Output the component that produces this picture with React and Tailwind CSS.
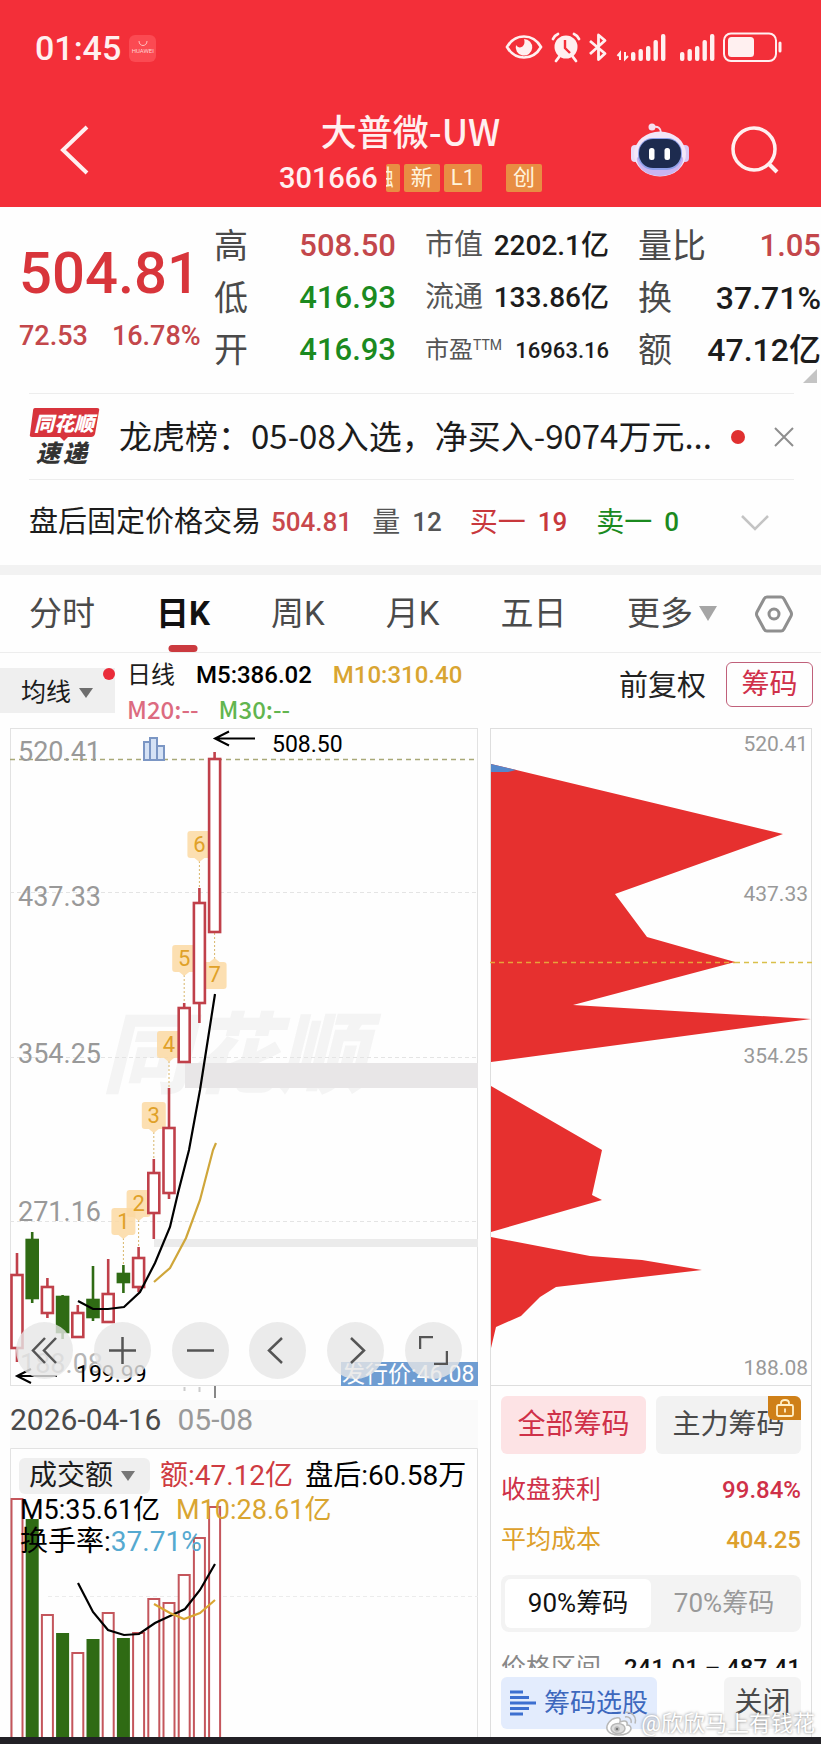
import { useState } from "react";

const GREEN = "#2f6b14";
const RED = "#c0404a";
const GOLD = "#d9a531";

// Vertical values are positions on the price axis of the chart
const candles = [
  { high: 525, top: 546, bottom: 621, low: 634, up: true },
  { high: 504, top: 511, bottom: 571, low: 575, up: false },
  { high: 550, top: 558, bottom: 586, low: 590, up: true },
  { high: 567, top: 568, bottom: 605, low: 611, up: false },
  { high: 577, top: 584, bottom: 610, low: 610, up: true },
  { high: 538, top: 571, bottom: 590, low: 593, up: false },
  { high: 531, top: 565, bottom: 595, low: 595, up: true },
  { high: 537, top: 545, bottom: 555, low: 565, up: false },
  { high: 519, top: 529, bottom: 560, low: 564, up: true },
  { high: 431, top: 444, bottom: 486, low: 511, up: true },
  { high: 360, top: 399, bottom: 466, low: 471, up: true },
  { high: 275, top: 279, bottom: 335, low: 335, up: true },
  { high: 160, top: 174, bottom: 276, low: 295, up: true },
  { high: 24, top: 30, bottom: 205, low: 205, up: true },
];

const marks = [
  { n: 1, i: 7, y: 480 },
  { n: 2, i: 8, y: 462 },
  { n: 3, i: 9, y: 374 },
  { n: 4, i: 10, y: 303 },
  { n: 5, i: 11, y: 217 },
  { n: 6, i: 12, y: 103 },
];

const volumeTops = [50, 71, 166, 185, 204, 191, 164, 190, 184, 150, 154, 126, 89, 58];

const priceLabels = [
  { text: "520.41", y: 33 },
  { text: "437.33", y: 178 },
  { text: "354.25", y: 335 },
  { text: "271.16", y: 493 },
];

const chipLabels = [
  { text: "520.41", y: 23 },
  { text: "437.33", y: 173 },
  { text: "354.25", y: 335 },
  { text: "188.08", y: 647 },
];

const tabs = ["分时", "日K", "周K", "月K", "五日"];

const cx = (i) => 7 + 15.2 * i;

function StatusIcons() {
  const tops = [20, 17, 14, 8, 2];
  return (
    <svg width="278" height="32" viewBox="0 0 278 32" fill="none" className="text-[#fff0f0]">
      {/* eye */}
      <path d="M2 15C10 1 28 1 36 15C28 29 10 29 2 15Z" stroke="currentColor" strokeWidth="2.6" />
      <path d="M19 7a8.3 8.3 0 1 1-8 6c1.500 2.500 4 3 6 1.800 2.500-1.500 3-5 2-7.800Z" fill="currentColor" />
      {/* alarm */}
      <circle cx="61" cy="15" r="11.500" fill="currentColor" />
      <path d="M48 7c1-2.500 2.500-4 5-5M74 7c-1-2.500-2.500-4-5-5M54 25l-3 4M68 25l3 4" stroke="currentColor" strokeWidth="2.800" strokeLinecap="round" />
      <path d="M60 8v8l5 5" stroke="#f32f39" strokeWidth="2.400" />
      {/* bluetooth */}
      <path d="M85 9l15 12.500-6.500 6V3l6.500 5.500L85 22" stroke="currentColor" strokeWidth="2.800" strokeLinejoin="round" />
      {/* signal */}
      <path d="M115 28v-7l-2.500 3M120 20v7l3-3" stroke="currentColor" strokeWidth="2" />
      {tops.map((t, i) => (
        <rect key={i} x={126 + i * 7.5} y={t} width="4.400" height={29 - t} rx="2" fill="currentColor" />
      ))}
      {tops.map((t, i) => (
        <rect key={i} x={175 + i * 7.5} y={t} width="4.400" height={29 - t} rx="2" fill="currentColor" />
      ))}
      {/* battery */}
      <rect x="219" y="1.500" width="52" height="27.500" rx="7" stroke="currentColor" strokeWidth="2" />
      <rect x="223" y="5" width="26" height="20" rx="3.500" fill="currentColor" />
      <path d="M275 11v8" stroke="currentColor" strokeWidth="3" strokeLinecap="round" />
    </svg>
  );
}

function Robot() {
  return (
    <svg width="58" height="54" viewBox="0 0 58 54">
      <path d="M22 4c5-1 8 1 8 6" fill="none" stroke="#f3dcee" strokeWidth="2" />
      <circle cx="21" cy="4" r="3.500" fill="#f6dff0" />
      <rect x="0" y="22" width="8" height="17" rx="4" fill="#eadcf8" />
      <rect x="50" y="22" width="8" height="17" rx="4" fill="#d9c8f5" />
      <ellipse cx="29" cy="31" rx="26" ry="22.500" fill="#f3e6f8" />
      <path d="M6 38c5 20 41 20 46 0 1-6-3-4-6-2-12 9-24 9-34 0-4-3-7-3-6 2Z" fill="#c9b4f0" />
      <rect x="7" y="15" width="44" height="32" rx="15" fill="#8ea0ea" />
      <rect x="8" y="16" width="42" height="29" rx="14" fill="#1d2b4f" />
      <rect x="18" y="25" width="5.500" height="12" rx="2.500" fill="#fff" />
      <rect x="33.500" y="25" width="5.500" height="12" rx="2.500" fill="#fff" />
    </svg>
  );
}

function Tag({ children }) {
  return (
    <span className="bg-[#e88d43] rounded-xs px-[7px] h-7 leading-7 text-[22px] text-[#fff3dc]">
      {children}
    </span>
  );
}

function Header() {
  return (
    <header className="bg-[#f32f39] text-[#fff0f0]">
      <div className="h-24 pl-[35px] pr-[38px] flex items-center justify-between">
        <div className="flex items-center gap-2">
          <span className="text-[34px] font-medium leading-10">01:45</span>
          <span className="size-[27px] rounded-md bg-[#fb4a52] flex flex-col items-center justify-center">
            <svg width="10" height="6" viewBox="0 0 10 6" fill="none" stroke="#ffc0c0">
              <path d="M1 0c0 6 8 6 8 0" />
            </svg>
            <span className="text-[6px] leading-2 text-[#ffd0d0]">HUAWEI</span>
          </span>
        </div>
        <StatusIcons />
      </div>

      <div className="h-[111px] pb-1 grid grid-cols-[1fr_auto_1fr] items-center">
        <button aria-label="返回" className="ml-[60px] justify-self-start">
          <svg width="30" height="52" viewBox="0 0 30 52" fill="none">
            <path d="M27 3L3 26L27 49" stroke="currentColor" strokeWidth="4" />
          </svg>
        </button>
        <div className="flex flex-col items-center gap-2">
          <h1 className="text-[36px] leading-12 font-medium font-['Noto_Sans_CJK_SC',sans-serif]">
            大普微-UW
          </h1>
          <div className="flex items-center">
            <span className="text-[29px] leading-8 font-medium mr-2">301666</span>
            <span className="w-3.5 h-7 mr-1 rounded-xs bg-[#e88d43] overflow-hidden flex justify-end">
              <span className="shrink-0 text-[22px] leading-7 pr-1.5 text-[#fff3dc]">融</span>
            </span>
            <Tag>新</Tag>
            <span className="w-1" />
            <Tag>L1</Tag>
            <span className="w-6" />
            <Tag>创</Tag>
          </div>
        </div>
        <div className="flex items-center justify-end gap-[42px] pr-[42px]">
          <button aria-label="智能助手">
            <Robot />
          </button>
          <button aria-label="搜索">
            <svg width="48" height="48" viewBox="0 0 48 48" fill="none" stroke="currentColor" strokeWidth="3.500">
              <circle cx="23" cy="23" r="21" />
              <path d="M38 38l8 8" strokeWidth="4" />
            </svg>
          </button>
        </div>
      </div>
    </header>
  );
}

function Stat({ label, value, labelClass, valueClass }) {
  return (
    <div className="h-[52px] flex items-center justify-between whitespace-nowrap">
      <dt className={labelClass}>{label}</dt>
      <dd className={valueClass}>{value}</dd>
    </div>
  );
}

function Quote() {
  const big = "text-[34px] text-[#4a4a4a]";
  const mid = "text-[29px] text-[#555]";
  return (
    <section className="relative flex h-[186px] pt-[13px] pl-[19px]">
      <div className="w-[195px] shrink-0">
        <div className="mt-4 text-[58px] leading-[74px] font-medium text-[#d8353b]">504.81</div>
        <div className="flex gap-6 text-[27px] leading-[52px] font-medium text-[#c3474b]">
          <span>72.53</span>
          <span>16.78%</span>
        </div>
      </div>
      <dl className="w-[182px] shrink-0">
        <Stat label="高" value="508.50" labelClass={big} valueClass="text-[31px] font-medium text-[#c3474b]" />
        <Stat label="低" value="416.93" labelClass={big} valueClass="text-[31px] font-medium text-[#1b8a1f]" />
        <Stat label="开" value="416.93" labelClass={big} valueClass="text-[31px] font-medium text-[#1b8a1f]" />
      </dl>
      <dl className="w-[184px] ml-[29px] shrink-0">
        <Stat label="市值" value="2202.1亿" labelClass={mid} valueClass="text-[28px] font-medium text-[#1c1c1c]" />
        <Stat label="流通" value="133.86亿" labelClass={mid} valueClass="text-[28px] font-medium text-[#1c1c1c]" />
        <Stat
          label={<>市盈<sup className="text-sm -top-2">TTM</sup></>}
          value="16963.16"
          labelClass="text-2xl text-[#555]"
          valueClass="text-[22px] font-medium text-[#1c1c1c]"
        />
      </dl>
      <dl className="flex-1 ml-[29px]">
        <Stat label="量比" value="1.05" labelClass={big} valueClass="text-[31px] font-medium text-[#c3474b]" />
        <Stat label="换" value="37.71%" labelClass={big} valueClass="text-[32px] font-medium text-[#1c1c1c]" />
        <Stat label="额" value="47.12亿" labelClass={big} valueClass="text-[32px] font-medium text-[#1c1c1c]" />
      </dl>
      <svg width="14" height="14" className="absolute right-1 bottom-2.5">
        <path d="M14 0V14H0Z" fill="#c4c4c4" />
      </svg>
    </section>
  );
}

function News() {
  return (
    <section className="ml-[29px] mr-[27px] h-[87px] border-y border-[#ededed] flex items-center">
      <svg width="71" height="60" viewBox="0 0 71 60" className="shrink-0">
        <path d="M6 1H68q3 0 2 3L66 27q-1 3-4 3H39l-4 4-4-4H3q-3 0-2-3L4 4q0-3 2-3Z" fill="#d8343d" />
        <g className="font-['Noto_Sans_CJK_SC',sans-serif] font-black italic">
          <text x="5" y="24" fontSize="20" fill="#fff">同花顺</text>
          <text x="7" y="55" fontSize="24" fill="#333">速</text>
          <text x="34" y="55" fontSize="24" fill="#333">递</text>
        </g>
      </svg>
      <a href="#news" className="ml-[19px] pb-1 flex-1 min-w-0 whitespace-nowrap text-[33px] leading-12 text-[#1c1c1c] font-['Noto_Sans_CJK_SC',sans-serif]">
        龙虎榜：05-08入选，净买入-9074万元...
      </a>
      <span className="size-3.5 rounded-full bg-[#e03030] mr-[29px]" />
      <button aria-label="关闭提示">
        <svg width="20" height="20" viewBox="0 0 20 20" stroke="#8e8e8e" strokeWidth="2">
          <path d="M1 1L19 19M19 1L1 19" />
        </svg>
      </button>
    </section>
  );
}

function AfterHours() {
  return (
    <section className="h-[85px] pl-[29px] pr-[52px] flex items-center text-[26px] whitespace-nowrap">
      <span className="text-[29px] text-[#1c1c1c]">盘后固定价格交易</span>
      <span className="ml-2.5 font-medium text-[#c8484c]">504.81</span>
      <span className="ml-5 text-[28px] text-[#555]">量</span>
      <span className="ml-3 font-medium text-[#555]">12</span>
      <span className="ml-7 text-[28px] text-[#c8383c]">买一</span>
      <span className="ml-3 font-medium text-[#c8383c]">19</span>
      <span className="ml-[29px] text-[28px] text-[#1b8a1f]">卖一</span>
      <span className="ml-3 font-medium text-[#1b8a1f]">0</span>
      <button aria-label="展开" className="ml-auto">
        <svg width="28" height="16" viewBox="0 0 28 16" fill="none" stroke="#c4c4c4" strokeWidth="2.500">
          <path d="M1 1L14 14L27 1" />
        </svg>
      </button>
    </section>
  );
}

function Tabs() {
  const [active, setActive] = useState("日K");
  return (
    <nav className="h-[77px] border-t-[10px] box-content border-[#f2f2f2] pl-[29px] pr-[28px] flex items-center text-[33px] text-[#4a4a4a]">
      <div className="flex gap-[61px]">
        {tabs.map((tab) => (
          <button
            key={tab}
            onClick={() => setActive(tab)}
            className={"relative h-[77px] whitespace-nowrap " + (tab === active ? "font-bold text-[#111]" : "")}
          >
            {tab}
            {tab === active && (
              <span className="absolute bottom-0 left-1/2 -translate-x-1/2 w-[29px] h-[7px] rounded-full bg-[#cb3a3f]" />
            )}
          </button>
        ))}
      </div>
      <button className="ml-auto flex items-center gap-1.5">
        更多
        <svg width="18" height="15">
          <path d="M0 0H18L9 15Z" fill="#a6a6a6" />
        </svg>
      </button>
      <button aria-label="设置" className="ml-[38px]">
        <svg width="38" height="38" viewBox="0 0 38 38" fill="none" stroke="#8f8f8f" strokeWidth="3">
          <path d="M12 2H26q2 0 3 2L36 17q1 2 0 4L29 34q-1 2-3 2H12q-2 0-3-2L2 21q-1-2 0-4L9 4q1-2 3-2Z" />
          <circle cx="19" cy="19" r="5" />
        </svg>
      </button>
    </nav>
  );
}

function Indicators() {
  return (
    <section className="h-[76px] border-t border-[#ededed] flex items-start whitespace-nowrap">
      <button className="relative mt-[15px] w-[115px] h-[45px] bg-[#efefef] pl-[21px] pt-1 flex items-center gap-2 text-[25px] text-[#1c1c1c]">
        均线
        <svg width="14" height="10">
          <path d="M0 0H14L7 10Z" fill="#6e6e6e" />
        </svg>
        <span className="absolute right-0 top-0 size-3 rounded-full bg-[#ea2c3a]" />
      </button>
      <div className="ml-3 mt-1.5 text-2xl leading-[33px] font-medium">
        <div className="flex gap-[21px]">
          <span className="text-[#1c1c1c] font-normal">日线</span>
          <span className="text-black">M5:386.02</span>
          <span className="text-[#d9a531]">M10:310.40</span>
        </div>
        <div className="flex gap-5 font-['Noto_Sans_CJK_SC',sans-serif]">
          <span className="text-[#dc6b80]">M20:--</span>
          <span className="text-[#62b54f]">M30:--</span>
        </div>
      </div>
      <div className="ml-auto mt-2 mr-2 flex items-center gap-5">
        <button className="pt-1 text-[29px] text-[#222]">前复权</button>
        <button className="w-[87px] h-[45px] rounded-md border border-[#c0607a] text-[28px] leading-10 text-[#d0314a]">
          筹码
        </button>
      </div>
    </section>
  );
}

function RoundButton({ label, path }) {
  return (
    <button aria-label={label} className="size-[57px] rounded-full bg-[#e6e6e6]/80 grid place-items-center">
      <svg width="29" height="29" viewBox="0 0 29 29" fill="none" stroke="#555" strokeWidth="2.500">
        <path d={path} />
      </svg>
    </button>
  );
}

function KLineChart() {
  return (
    <div className="relative">
      <svg viewBox="0 0 468 672" className="block w-full h-auto">
        <rect x="0.5" y="0.5" width="467" height="657" fill="#fefefe" stroke="#e2e2e2" />
        <text x="92" y="358" fontSize="88" fill="#f4f4f4" className="font-['Noto_Sans_CJK_SC',sans-serif] font-black italic">
          同花顺
        </text>
        <g stroke="#e4e4e4" strokeDasharray="4 3">
          <path d="M0 164.500H468M0 329.500H468M0 493.500H468" />
        </g>
        <path d="M0 31.500H468" stroke="#a9a977" strokeWidth="1.500" strokeDasharray="5 4" />
        <rect x="175" y="335" width="293" height="25" fill="#e8e6e7" />
        <rect x="144" y="511" width="324" height="8" fill="#ebebeb" />

        <g fontSize="27" fill="#999">
          {priceLabels.map((l) => (
            <text key={l.text} x="8" y={l.y}>{l.text}</text>
          ))}
          <text x="10" y="645" fill="#b5b5b5">188.08</text>
        </g>

        <g fill="#d5e2f5" stroke="#7b96c4" strokeWidth="2">
          <path d="M134 14H140V32H134ZM147 18H154V32H147ZM140 10H147V32H140Z" />
        </g>

        {/* consecutive rise markers */}
        {marks.map((m) => (
          <g key={m.n}>
            <path d={`M${cx(m.i)} ${m.y + 30}V${candles[m.i].high}`} stroke="#d8b66a" strokeDasharray="2 2" />
            <path
              d={`M${cx(m.i) - 9} ${m.y}h18q3 0 3 3v21q0 3-3 3h-4l-5 4l-5-4h-4q-3 0-3-3v-21q0-3 3-3Z`}
              fill="#fbd9a3"
              fillOpacity="0.85"
            />
            <text x={cx(m.i)} y={m.y + 21} fontSize="22" fill="#e0a128" textAnchor="middle">{m.n}</text>
          </g>
        ))}
        <path d="M204.600 205V232" stroke="#d8b66a" strokeDasharray="2 2" />
        <path d="M195.600 234h4l5-4l5 4h4q3 0 3 3v21q0 3-3 3h-18q-3 0-3-3v-21q0-3 3-3Z" fill="#fbd9a3" fillOpacity="0.85" />
        <text x="204.600" y="254" fontSize="22" fill="#e0a128" textAnchor="middle">7</text>

        {candles.map((c, i) => (
          <g key={i} stroke={c.up ? RED : GREEN} strokeWidth="2.600">
            <path d={`M${cx(i)} ${c.high}V${c.low}`} />
            <rect
              x={cx(i) - 5.5}
              y={c.top + 1}
              width="11"
              height={c.bottom - c.top - 2}
              fill={c.up ? "#fff" : GREEN}
            />
          </g>
        ))}

        <polyline
          points="68,573 83,581 98,581 114,579 130,564 145,535 160,499 168,465 179,422 190,362 205,266"
          fill="none"
          stroke="#000"
          strokeWidth="2.200"
        />
        <polyline points="144,554 160,540 176,510 190,472 203,422 206,415" fill="none" stroke="#cfa63a" strokeWidth="2.200" />

        <path d="M245 10.500H206M219 3.500L205 10.500L219 17.500" fill="none" stroke="#000" strokeWidth="2" />
        <text x="262" y="24" fontSize="23">508.50</text>
        <path d="M47 648H8M21 641L7 648L21 655" fill="none" stroke="#000" strokeWidth="2" />
        <text x="66" y="654" fontSize="23">199.99</text>

        <rect x="331" y="634" width="137" height="24" fill="#6f9dd2" />
        <text x="332" y="654" fontSize="23" fill="#fff">发行价:46.08</text>

        <path d="M174.500 659V663M189.500 659V664" stroke="#ccc" strokeWidth="2" />
        <path d="M205 658V670" stroke="#888" strokeWidth="2" />
      </svg>
      <div className="absolute left-1.5 right-4 bottom-[21px] flex justify-between">
        <RoundButton label="最早" path="M15 2L3 14.500L15 27M26 2L14 14.500L26 27" />
        <RoundButton label="放大" path="M1 14.500H28M14.500 1V28" />
        <RoundButton label="缩小" path="M1 14.500H28" />
        <RoundButton label="向左" path="M19 2L6 14.500L19 27" />
        <RoundButton label="向右" path="M10 2L23 14.500L10 27" />
        <RoundButton label="全屏" path="M1 13V1H14M28 15V28H15" />
      </div>
    </div>
  );
}

function VolumeChart() {
  return (
    <div className="relative">
      <svg viewBox="0 0 468 289" className="block w-full h-auto">
        <path d="M0.500 289V0.500H467.500V289" fill="#fefefe" stroke="#e2e2e2" />
        <path d="M38 148.500H468" stroke="#ececec" strokeDasharray="4 3" />
        {volumeTops.map((top, i) => (
          <rect
            key={i}
            x={cx(i) - 5.5}
            y={top + 1}
            width="11"
            height="260"
            fill={candles[i].up ? "#fff" : GREEN}
            stroke={candles[i].up ? "#c4565c" : GREEN}
            strokeWidth="2"
          />
        ))}
        <polyline
          points="68,135 83,164 98,182 114,187 129,186 145,175 160,168 175,161 190,142 205,116"
          fill="none"
          stroke="#000"
          strokeWidth="2.200"
        />
        <polyline points="144,156 160,165 174,171 190,165 205,152" fill="none" stroke={GOLD} strokeWidth="2.200" />
      </svg>
      <div className="absolute inset-x-0 top-2.5 pl-[9px] text-[28px] leading-8 text-black whitespace-nowrap">
        <div className="flex items-center">
          <button className="w-[131px] h-9 rounded-md bg-[#efefef] pl-2.5 flex items-center gap-2 text-[28px] text-[#1c1c1c]">
            成交额
            <svg width="14" height="10">
              <path d="M0 0H14L7 10Z" fill="#777" />
            </svg>
          </button>
          <span className="ml-2.5 text-[#cf3c42]">额:47.12亿</span>
          <span className="ml-3">盘后:60.58万</span>
        </div>
        <div className="pl-px flex gap-3 text-[27px]">
          <span>M5:35.61亿</span>
          <span className="ml-1 text-[#d9a531]">M10:28.61亿</span>
        </div>
        <div className="pl-px">
          换手率:<span className="text-[#55a9d0]">37.71%</span>
        </div>
      </div>
    </div>
  );
}

function ChipChart() {
  return (
    <svg viewBox="0 0 322 658" className="block w-full h-auto">
      <rect x="0.500" y="0.500" width="321" height="657" fill="#fefefe" stroke="#dedede" />
      <path
        d="M1 36L293 106L125 166L157 209L245 234L83 277L321 291L1 334Z"
        fill="#e6302f"
      />
      <path d="M1 358L112 422L102 467L112 472L1 504Z" fill="#e6302f" />
      <path d="M1 509L100 528L152 532L212 542L66 559L50 569L31 588L6 599L1 620Z" fill="#e6302f" />
      <path d="M1 36L26 42L18 44H1Z" fill="#5487cb" />
      <path d="M0 234.500H245" stroke="#e8a33a" strokeWidth="1.500" strokeDasharray="5 4" />
      <path d="M245 234.500H322" stroke="#d9c04a" strokeWidth="1.500" strokeDasharray="5 4" />
      <g fontSize="21" fill="#999" textAnchor="end">
        {chipLabels.map((l) => (
          <text key={l.text} x="318" y={l.y}>{l.text}</text>
        ))}
      </g>
    </svg>
  );
}

function ChipPanel() {
  const [range, setRange] = useState("90%筹码");
  return (
    <div className="flex-1 border-x border-[#dedede] px-2.5 pt-2.5 pb-2 flex flex-col whitespace-nowrap">
      <div className="grid grid-cols-2 gap-2.5 text-[28px]">
        <button className="h-[58px] rounded-md bg-[#fde3e5] text-[#cf3048]">全部筹码</button>
        <button className="relative h-[58px] rounded-md bg-[#f2f2f2] text-[#4a4a4a]">
          主力筹码
          <span className="absolute right-0 top-0 w-[33px] h-6 rounded-tr-md rounded-bl-md bg-[#cf8018] grid place-items-center">
            <svg width="18" height="18" viewBox="0 0 18 18" fill="none" stroke="#fff0c8" strokeWidth="1.800">
              <rect x="1" y="6" width="16" height="11" rx="1.500" />
              <path d="M5 6V4q0-3 4-3t4 3V6M9 9.500v4" />
            </svg>
          </span>
        </button>
      </div>
      <dl className="mt-[11px] text-2xl leading-[50px] font-medium">
        <div className="flex justify-between text-[#cf3048]">
          <dt className="text-[25px] font-normal">收盘获利</dt>
          <dd>99.84%</dd>
        </div>
        <div className="flex justify-between text-[#dda02c]">
          <dt className="text-[25px] font-normal">平均成本</dt>
          <dd>404.25</dd>
        </div>
      </dl>
      <div className="mt-2.5 h-[57px] p-1 rounded-lg bg-[#f3f3f3] grid grid-cols-2 text-[26px]">
        {["90%筹码", "70%筹码"].map((r) => (
          <button
            key={r}
            onClick={() => setRange(r)}
            className={r === range ? "rounded-md bg-white text-[#111]" : "text-[#999]"}
          >
            {r}
          </button>
        ))}
      </div>
      <div className="mt-4 h-5 overflow-hidden flex justify-between text-2xl leading-10">
        <span className="text-[25px] text-[#888]">价格区间</span>
        <span className="font-medium text-[#111]">241.01 – 487.41</span>
      </div>
      <div className="mt-auto flex justify-between">
        <button className="w-[156px] h-[52px] rounded-md bg-[#e3ecfd] flex items-center justify-center gap-2 text-[26px] text-[#3d68bd]">
          <svg width="26" height="26" viewBox="0 0 26 26" stroke="#3d6fd0" strokeWidth="3">
            <path d="M0 2H13M0 7.500H19M0 13H26M0 18.500H19M0 24H13" />
          </svg>
          筹码选股
        </button>
        <button className="w-[77px] h-[52px] rounded-md bg-[#f3f3f3] text-[28px] text-[#4a4a4a]">关闭</button>
      </div>
    </div>
  );
}

export default function App() {
  return (
    <div className="relative overflow-hidden bg-[#fefefe] font-['Roboto','Noto_Sans_CJK_SC',sans-serif]">
      <Header />
      <Quote />
      <News />
      <AfterHours />
      <Tabs />
      <Indicators />

      <main className="pl-2.5 pr-[9px] grid grid-cols-[468fr_322fr] gap-3">
        <div className="min-w-0">
          <KLineChart />
          <div className="h-12 pb-2 flex items-center gap-4 text-[30px] leading-10 text-[#4a4a4a] bg-[#fafafa]">
            <span>2026-04-16</span>
            <span className="text-[#999]">05-08</span>
          </div>
          <VolumeChart />
        </div>
        <div className="min-w-0 flex flex-col">
          <ChipChart />
          <ChipPanel />
        </div>
      </main>
      <div className="h-[7px] bg-[#222126]" />

      <div className="absolute right-1.5 bottom-1.5 flex items-center gap-1 text-[22px] leading-7 text-white text-shadow-[0_0_3px_#777]">
        <svg width="32" height="26" viewBox="0 0 32 26" fill="none" stroke="#b8b8b8" strokeWidth="1.500">
          <path d="M11 7C5 8 1 14 2 18c2 8 22 8 24 0 0-3-2-4-4-4 1-4-2-5-7-3 1-4-1-5-4-4Z" fill="#fff" />
          <ellipse cx="13" cy="17.500" rx="7" ry="5" fill="#ddd" />
          <circle cx="12" cy="18" r="2" fill="#777" />
          <path d="M20 6c4-1 7 2 6 6M20 1.500c7-1 12 4 10 11" />
        </svg>
        <span>@欣欣马上有钱花</span>
      </div>
    </div>
  );
}
